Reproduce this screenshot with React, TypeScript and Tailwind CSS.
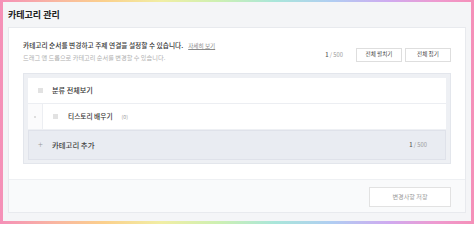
export default function App() {
  return (
    <div
      className="w-[474px] h-[224px] pt-[2px] pb-[3px] px-[3px] bg-[linear-gradient(90deg,#f590b8_0%,#f9b7a0_12%,#fbd08c_22%,#f1eea4_34%,#cdf0b2_46%,#a9e6da_58%,#b0cdf2_70%,#cfaaf0_82%,#ee9ad0_92%,#f590b8_100%)] font-['Noto_Sans_CJK_KR','Noto_Sans',sans-serif]"
    >
      <div className="h-full bg-[#f4f5f7] px-[5px] pb-[9px]">
        <h1 className="h-[25px] pt-[7px] text-[9px] leading-[12px] font-bold text-[#222]">
          카테고리 관리
        </h1>

        <div className="bg-white border border-[#e8eaee]">
          <div className="px-[14px] pt-[12px] pb-[15px]">
            <div className="flex items-end justify-between">
              <div>
                <p className="text-[6.7px] leading-[10px] font-medium text-[#333]">
                  카테고리 순서를 변경하고 주제 연결을 설정할 수 있습니다.
                  <a href="#" className="ml-[5px] text-[5.6px] font-normal text-[#8a8a8a] underline">
                    자세히 보기
                  </a>
                </p>
                <p className="mt-[2px] text-[6.2px] leading-[10px] text-[#b0b0b0]">
                  드래그 앤 드롭으로 카테고리 순서를 변경할 수 있습니다.
                </p>
              </div>
              <div className="mb-[1px] flex items-center gap-[3px]">
                <span className="mr-[10px] text-[5.8px] text-[#9a9a9a]">
                  <span className="font-medium text-[#555]">1</span> / 500
                </span>
                <button className="w-[46px] h-[14px] border border-[#dedede] bg-white text-[5.6px] leading-none text-[#444]">
                  전체 펼치기
                </button>
                <button className="w-[46px] h-[14px] border border-[#dedede] bg-white text-[5.6px] leading-none text-[#444]">
                  전체 접기
                </button>
              </div>
            </div>

            <div className="mt-[10px] bg-[#eef0f4] border border-[#e3e6ec] px-[4px] pt-[4px] pb-[3px]">
              <div className="bg-white">
                <div className="h-[26px] flex items-center pl-[10px] gap-[9px] border-b border-[#eceef2]">
                  <span className="w-[5px] h-[5px] bg-[#e2e2e2]" />
                  <span className="text-[7.1px] font-medium text-[#333]">분류 전체보기</span>
                </div>
                <div className="h-[25px] flex items-stretch">
                  <div className="w-[15px] flex items-center justify-center border-r border-[#eceef2] bg-[#fbfbfc]">
                    <span className="w-[2px] h-[2px] rounded-full bg-[#d4d4d4]" />
                  </div>
                  <div className="flex items-center pl-[10px] gap-[10px]">
                    <span className="w-[5px] h-[5px] bg-[#e2e2e2]" />
                    <span className="text-[6.7px] font-medium text-[#333]">
                      티스토리 배우기
                      <span className="ml-[9px] text-[5.2px] font-normal text-[#a0a0a0]">(0)</span>
                    </span>
                  </div>
                </div>
              </div>
              <div className="mt-[1px] h-[30px] flex items-center justify-between bg-[#e9ecf2] border border-[#dfe2ea] pl-[9px] pr-[18px]">
                <div className="flex items-center gap-[9px]">
                  <span className="w-[5px] text-[9px] leading-none font-light text-[#9a9a9a]">+</span>
                  <span className="text-[7.4px] font-medium text-[#444]">카테고리 추가</span>
                </div>
                <span className="text-[5.8px] text-[#9a9a9a]">
                  <span className="font-medium text-[#555]">1</span> / 500
                </span>
              </div>
            </div>
          </div>

          <div className="border-t border-[#eef0f3] bg-[#f9fafb] flex justify-end px-[14px] pt-[7px] pb-[5px]">
            <button className="w-[82px] h-[20px] border border-[#e2e2e2] bg-white text-[6.1px] text-[#9a9a9a]">
              변경사항 저장
            </button>
          </div>
        </div>
      </div>
    </div>
  );
}
